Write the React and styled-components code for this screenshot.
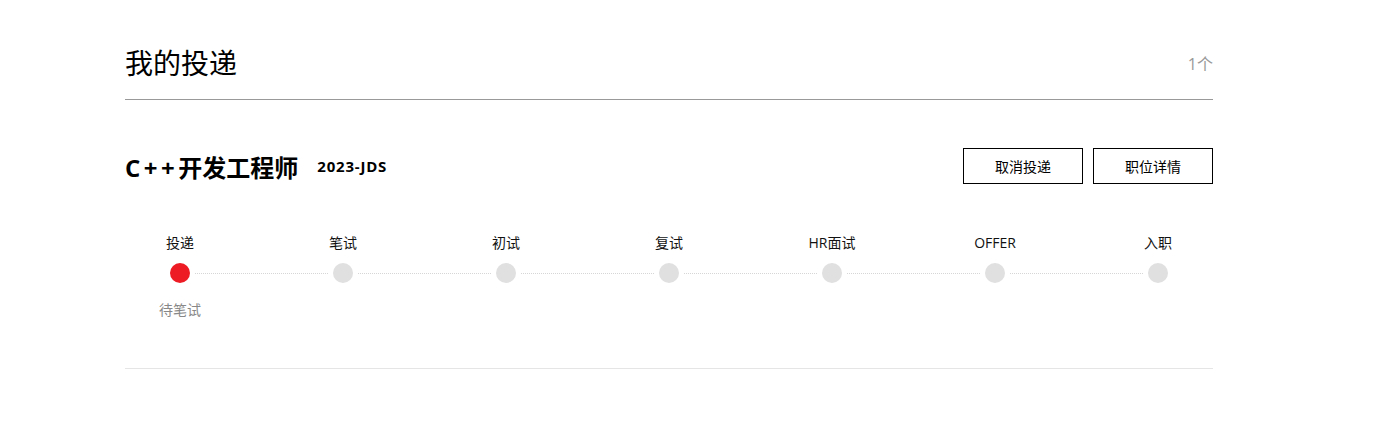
import React from 'react'
import styled, { createGlobalStyle } from 'styled-components'

const GlobalStyle = createGlobalStyle`
  body {
    margin: 0;
    background: #fff;
    font-family: 'Open Sans', 'Noto Sans CJK SC', sans-serif;
    color: #000;
  }
`

const Page = styled.div`
  width: 1088px;
  padding: 43px 0 0 125px;
`

const Header = styled.div`
  display: flex;
  justify-content: space-between;
  align-items: center;
  padding-bottom: 16px;
  border-bottom: 1px solid #999;
`

const Title = styled.h1`
  margin: 0;
  font-size: 28px;
  line-height: 40px;
  font-weight: normal;
`

const Count = styled.span`
  font-size: 16px;
  color: #999;
`

const Card = styled.div`
  padding: 48px 0 48px;
  border-bottom: 1px solid #e5e5e5;
`

const JobRow = styled.div`
  display: flex;
  align-items: center;
  height: 36px;
`

const JobName = styled.span`
  font-size: 24px;
  font-weight: bold;
`

const Latin = styled.span`
  letter-spacing: 3.5px;
`

const JobCode = styled.span`
  margin-left: 19px;
  font-size: 15px;
  font-weight: bold;
  letter-spacing: 0.8px;
`

const Actions = styled.div`
  margin-left: auto;
  display: flex;
  gap: 10px;
`

const ActionButton = styled.button`
  width: 120px;
  height: 36px;
  border: 1px solid #000;
  background: #fff;
  font-family: inherit;
  font-size: 14px;
  color: #000;
  cursor: pointer;
`

const Steps = styled.div`
  display: flex;
  margin-top: 49px;
  padding: 0 40px;
`

const Step = styled.div`
  width: 30px;
  display: flex;
  flex-direction: column;
  align-items: center;
  flex-shrink: 0;
`

const StepLabel = styled.span`
  font-size: 14px;
  line-height: 20px;
  white-space: nowrap;
  color: #111;
`

const Dot = styled.span`
  width: 20px;
  height: 20px;
  border-radius: 50%;
  margin-top: 10px;
  background: ${p => (p.$active ? '#ed1c24' : '#e0e0e0')};
`

const StepStatus = styled.span`
  margin-top: 17px;
  font-size: 14px;
  line-height: 20px;
  white-space: nowrap;
  color: #888;
`

const Connector = styled.span`
  flex: 1;
  height: 0;
  margin-top: 40px;
  border-top: 1px dotted #d6d6d6;
`

const steps = ['投递', '笔试', '初试', '复试', 'HR面试', 'OFFER', '入职']

const App = () => {
  const current = 0
  return (
    <>
      <GlobalStyle />
      <Page>
        <Header>
          <Title>我的投递</Title>
          <Count>1个</Count>
        </Header>
        <Card>
          <JobRow>
            <JobName>
              <Latin>C++</Latin>开发工程师
            </JobName>
            <JobCode>2023-JDS</JobCode>
            <Actions>
              <ActionButton>取消投递</ActionButton>
              <ActionButton>职位详情</ActionButton>
            </Actions>
          </JobRow>
          <Steps>
            {steps.map((s, i) => (
              <React.Fragment key={s}>
                {i > 0 && <Connector />}
                <Step>
                  <StepLabel>{s}</StepLabel>
                  <Dot $active={i === current} />
                  {i === current && <StepStatus>待笔试</StepStatus>}
                </Step>
              </React.Fragment>
            ))}
          </Steps>
        </Card>
      </Page>
    </>
  )
}

export default App
